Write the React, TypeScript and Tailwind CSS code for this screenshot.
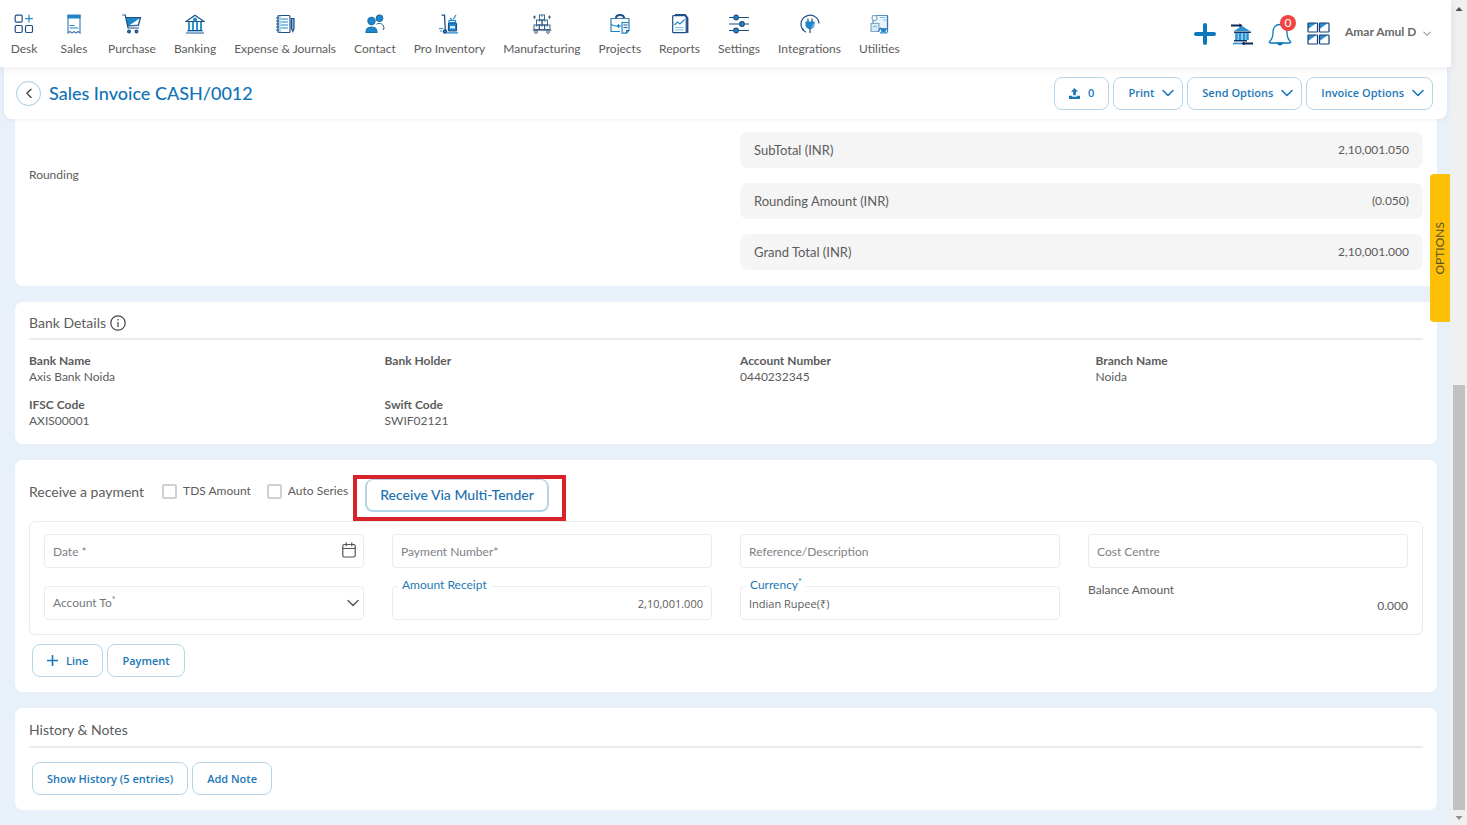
import type { ReactNode } from "react";

const D = "#1d4f86";
const B = "#1d87c9";
const L = "#7cc0ea";

function Glyph({ children, size = "size-5" }: { children: ReactNode; size?: string }) {
  return (
    <svg viewBox="0 0 20 20" className={size} fill="none" stroke={D} strokeWidth="1.2" aria-hidden="true">
      {children}
    </svg>
  );
}

const navItems: { label: string; icon: ReactNode }[] = [
  {
    label: "Desk",
    icon: (
      <Glyph>
        <rect x="1.2" y="1.2" width="7" height="7" rx="1.2" />
        <rect x="1.2" y="11.5" width="7" height="7" rx="1.2" />
        <rect x="11.5" y="11.5" width="7" height="7" rx="1.2" />
        <path d="M15 .8v7.6M11.2 4.6h7.6" stroke={B} />
      </Glyph>
    ),
  },
  {
    label: "Sales",
    icon: (
      <Glyph>
        <path d="M4 1v18l2-1.5L8 19l2-1.500L12 19l2-1.500L16 19V1Z" stroke="#4a7fb0" />
        <path d="M3.500 1h13v3.500h-13z" fill={B} stroke="none" />
        <path d="M5.500 11.500h5M5.500 14h9" stroke={B} />
      </Glyph>
    ),
  },
  {
    label: "Purchase",
    icon: (
      <Glyph>
        <path d="M4 4h14l-1.800 7L5.600 12Z" fill={B} stroke="none" />
        <path d="M17.500 4.500 16 10.500l-8.500.8Z" fill="#fff" stroke="none" />
        <path d="M.5 1h2.700l2.800 13H17M4 3.500h14.500l-2 8L5.800 12" />
        <circle cx="7" cy="17.500" r="1.400" fill={B} />
        <circle cx="14.500" cy="17.500" r="1.400" fill={B} />
      </Glyph>
    ),
  },
  {
    label: "Banking",
    icon: (
      <Glyph>
        <path d="M1 7.500 10 1.200l9 6.300Z" />
        <circle cx="10" cy="5.500" r="2" fill={B} stroke="none" />
        <path d="M4 8v8M8 8v8M12 8v8M16 8v8" stroke={B} strokeWidth="1.800" />
        <path d="M2.500 16.500h15M1 19h18" />
        <path d="M2 17.800h16" stroke={L} />
      </Glyph>
    ),
  },
  {
    label: "Expense & Journals",
    icon: (
      <Glyph>
        <rect x="3" y="1.500" width="12" height="17" rx="1" />
        <path d="M1 4h3M1 7h3M1 10h3M1 13h3M1 16h3" />
        <path d="M6 5h7M6 8h7M6 11h7M6 14h7" stroke={B} />
        <path d="M16.500 4.500h2.500v10l-1.200 3-1.300-3Z" fill={L} />
        <path d="M5 1.500v17" stroke={L} />
      </Glyph>
    ),
  },
  {
    label: "Contact",
    icon: (
      <Glyph>
        <circle cx="6.500" cy="7" r="3.600" fill={B} stroke="#1b70ad" />
        <circle cx="14.500" cy="4.200" r="3.200" fill={B} stroke="#1b70ad" />
        <path d="M1 18.500c0-3.800 2-5.500 5.500-5.500s5.500 1.700 5.500 5.500Z" fill={B} stroke="#1b70ad" />
        <path d="M11.500 10.200c3.500-2 7.500 0 7.500 5h-1.500" strokeWidth=".9" />
      </Glyph>
    ),
  },
  {
    label: "Pro Inventory",
    icon: (
      <Glyph>
        <path d="M2.500 1.200h3l.8 15" strokeWidth="1.300" />
        <circle cx="6" cy="17.500" r="1.700" fill={B} />
        <path d="M8 18.800h11M0 14.500h4M1 17h2" stroke={B} />
        <rect x="9.500" y="9" width="8" height="8" rx="1" fill={B} />
        <path d="M11 12h5v2.500h-5z" fill="#d8edf9" stroke="none" />
        <path d="M10 6.500h6.500v2H10zM11 4l2 2M14 5.500l3-4.500" stroke={B} />
      </Glyph>
    ),
  },
  {
    label: "Manufacturing",
    icon: (
      <Glyph>
        <g strokeWidth=".9" stroke="#31567d">
          <rect x="7.500" y="1" width="5" height="5" />
          <rect x="4.500" y="6" width="5.500" height="5" />
          <rect x="10" y="6" width="5.500" height="5" />
          <rect x="2" y="11" width="5.300" height="4.500" />
          <rect x="7.300" y="11" width="5.300" height="4.500" />
          <rect x="12.600" y="11" width="5.400" height="4.500" />
          <path d="M10 1v2M7.200 6v2M12.800 6v2M10 11v1.800M4.600 11v1.800M15.300 11v1.800" stroke={B} />
          <path d="M.5 16.200h19" />
          <circle cx="4" cy="18" r="1.400" />
          <circle cx="16" cy="18" r="1.400" />
          <path d="M1 3h3M2.500 1.500V5M16 3h3M17.500 1.500V5" />
        </g>
      </Glyph>
    ),
  },
  {
    label: "Projects",
    icon: (
      <Glyph>
        <path d="M1 8V4.500h18V8M1 8v9.500h9" stroke="#3c79ad" />
        <path d="M6 4c0-4 8-4 8 0" strokeWidth="2" />
        <path d="M1 10.500c3 1.500 5 1.800 9 1.500M1 17.500h9" stroke={B} />
        <path d="M8.500 10v4M7 12h4" stroke={B} />
        <path d="M12 8.500h7v8l-2.500 2.700H12Z" fill="#eaf5fc" stroke={B} />
        <path d="M13.500 11h4M13.500 13.500h4M16.500 19v-2.500H19" stroke={D} strokeWidth=".9" />
      </Glyph>
    ),
  },
  {
    label: "Reports",
    icon: (
      <Glyph>
        <path d="M5 .9h10L17.500 4v15" strokeWidth="1.800" />
        <rect x="2.700" y="1.700" width="13.500" height="17" rx=".8" />
        <path d="m4.500 11 3-3 2.500 2 4.500-4.500" stroke={B} />
        <path d="M5 13.500h8.500M5 16h8.500" stroke={L} />
      </Glyph>
    ),
  },
  {
    label: "Settings",
    icon: (
      <Glyph>
        <path d="M0 3.500h20M0 10h20M0 16.500h20" />
        <circle cx="7" cy="3.500" r="2.300" fill={B} />
        <circle cx="13" cy="10" r="2.300" fill={B} />
        <circle cx="7" cy="16.500" r="2.300" fill={B} />
      </Glyph>
    ),
  },
  {
    label: "Integrations",
    icon: (
      <Glyph>
        <path d="M6 18.200A9 9 0 1 1 19 9.500M2 14l2 2.500" />
        <path d="M6 8h8v2.500a4 4 0 0 1-8 0Z" fill={B} stroke={B} />
        <path d="M8 4.500V8M12 4.500V8M10 14v5" />
        <path d="m14 9-3.500 5.500L14 12Z" fill={L} stroke="none" />
      </Glyph>
    ),
  },
  {
    label: "Utilities",
    icon: (
      <Glyph>
        <path d="M4 1.500h14.500v13H4Z" fill="#e9f4fb" stroke="#5a8fbb" />
        <path d="M2 9.500h8v8H2Z" fill="#d8e8f4" stroke="#7fa9cc" />
        <circle cx="5.500" cy="4" r="2.500" stroke="#7fa9cc" fill="#fff" />
        <path d="M11 3.500h5M14 6h3M4 12.500h4" stroke={L} />
        <path d="M12 15h5l-1 2.500h-3ZM11 18.800h7" fill={B} stroke={B} />
        <path d="M18.500 2v16.500M9 17.500l3-4" stroke="#3b78b0" />
      </Glyph>
    ),
  },
];

function Chevron({ className }: { className: string }) {
  return (
    <svg viewBox="0 0 12 8" className={className} fill="none" stroke="currentColor" strokeLinecap="round" strokeLinejoin="round" aria-hidden="true">
      <path d="m1 1.500 5 5 5-5" />
    </svg>
  );
}

function TopBar() {
  return (
    <header className="relative z-20 flex h-[67px] justify-between bg-white shadow-[0_2px_8px_rgba(0,0,0,0.08)]">
      <nav aria-label="Main" className="flex gap-[18px] pt-[14px] pl-2 text-xs leading-4 text-[#5c5c5c]">
        {navItems.map((item) => (
          <a key={item.label} href="#" className="flex min-w-8 flex-col items-center gap-[7px] whitespace-nowrap">
            {item.icon}
            {item.label}
          </a>
        ))}
      </nav>
      <div className="flex items-center gap-[15px] pr-5">
        <button type="button" aria-label="Add new">
          <svg viewBox="0 0 22 22" className="size-[22px]" stroke="#0b77bd" strokeWidth="4" strokeLinecap="round" aria-hidden="true">
            <path d="M11 2v18M2 11h18" />
          </svg>
        </button>
        <button type="button" aria-label="Bank transfers">
          <svg viewBox="0 0 22 22" className="size-[22px]" fill="none" aria-hidden="true">
            <path d="m3 8 8-5 8 5Z" fill="#2b90cf" />
            <path d="M3 9.200h17M3 17.800h13" stroke="#12386b" strokeWidth="1.600" />
            <path d="M4 10h14v7H4Z" fill="#8cc6ea" />
            <path d="M5.500 10v7M9 10v7M13 10v7M16.500 10v7" stroke="#2b90cf" strokeWidth="2" />
            <path d="M2 20.500h11" stroke="#2b90cf" strokeWidth="1.600" />
            <path d="M0 2.500h9M12.500 20.500H22" stroke="#0d2858" strokeWidth="2" />
            <path d="M8.500.2v4.600l3-2.300ZM13.500 18.200v4.600l-3-2.300Z" fill="#0d2858" />
          </svg>
        </button>
        <button type="button" aria-label="Notifications" className="relative">
          <svg viewBox="0 0 24 24" className="size-6" fill="none" stroke="#0b77bd" strokeWidth="1.300" strokeLinejoin="round" aria-hidden="true">
            <path d="M12 2.500c-4.500 0-7 3.300-7 7.500 0 5-1 7.500-3.500 9.500-.5.800 0 1.500 1 1.500h19c1 0 1.500-.700 1-1.500C20 17.500 19 15 19 10c0-4.200-2.500-7.500-7-7.500Z" />
            <path d="M9.500 21.200c.8 2.200 4.200 2.200 5 0Z" fill="#0b77bd" />
          </svg>
          <span className="absolute -top-[7px] left-3 flex size-4 items-center justify-center rounded-full bg-[#f04343] text-xs leading-4 text-white">0</span>
        </button>
        <button type="button" aria-label="Applications">
          <svg viewBox="0 0 23 23" className="size-[23px]" aria-hidden="true">
            {[
              [1, 1],
              [12.5, 1],
              [1, 13],
              [12.5, 13],
            ].map(([x, y]) => (
              <g key={`${x}-${y}`} transform={`translate(${x} ${y})`}>
                <path d="M0 0h8.500L0 6Z" fill="#2b90cf" />
                <rect width="9.500" height="9" rx=".5" fill="none" stroke="#153f78" strokeWidth="1.200" />
              </g>
            ))}
          </svg>
        </button>
        <button type="button" className="flex items-center gap-[7px] pb-1 text-xs leading-4 font-bold text-[#6a6a6a]">
          <span className="w-[71px] overflow-hidden text-left whitespace-nowrap">Amar Amul D</span>
          <Chevron className="mt-1 w-2 stroke-[1.5]" />
        </button>
      </div>
    </header>
  );
}

function OutlineButton({ children, className = "" }: { children: ReactNode; className?: string }) {
  return (
    <button
      type="button"
      className={`flex h-[33px] items-center rounded-lg border border-[#b7d5e9] bg-white px-[14px] font-['Open_Sans','Noto_Sans',sans-serif] text-[11px] leading-4 font-semibold whitespace-nowrap text-[#1b78b8] ${className}`}
    >
      {children}
    </button>
  );
}

function TitleBar() {
  return (
    <div className="relative z-10 mr-1 ml-1 flex h-[52px] items-center justify-between rounded-b-lg bg-white pr-[14px] pl-3 shadow-[0_1px_5px_rgba(0,0,0,0.06)]">
      <div className="flex items-center gap-2">
        <button type="button" aria-label="Back" className="flex size-[25px] items-center justify-center rounded-full border border-[#a9c8de] text-[#444]">
          <Chevron className="w-[10px] rotate-90 stroke-[1.6]" />
        </button>
        <h1 className="text-lg leading-6 font-medium text-[#1173b8]">Sales Invoice CASH/0012</h1>
      </div>
      <div className="flex gap-1">
        <OutlineButton className="gap-2">
          <svg viewBox="0 0 12 12" className="size-[11px]" fill="currentColor" aria-hidden="true">
            <path d="M6 0 2.200 4h2.300v4h3V4h2.300ZM0 8.500h3.500v1h5v-1H12V12H0Z" />
          </svg>
          0
        </OutlineButton>
        {["Print", "Send Options", "Invoice Options"].map((label) => (
          <OutlineButton key={label} className="gap-2 pr-2">
            {label}
            <Chevron className="w-3 stroke-[1.6]" />
          </OutlineButton>
        ))}
      </div>
    </div>
  );
}

function Card({ children, className = "" }: { children: ReactNode; className?: string }) {
  return <section className={`rounded-lg bg-white px-[14px] ${className}`}>{children}</section>;
}

const totals = [
  ["SubTotal (INR)", "2,10,001.050"],
  ["Rounding Amount (INR)", "(0.050)"],
  ["Grand Total (INR)", "2,10,001.000"],
];

const bankDetails = [
  ["Bank Name", "Axis Bank Noida"],
  ["Bank Holder", ""],
  ["Account Number", "0440232345"],
  ["Branch Name", "Noida"],
  ["IFSC Code", "AXIS00001"],
  ["Swift Code", "SWIF02121"],
];

const inputBox = "h-[34px] w-full rounded border border-[#eaecee] bg-white px-2 text-[#5c5c5c] outline-none placeholder:text-[#7d8288] placeholder:opacity-100";
const fieldBox = `${inputBox} text-xs`;
const filledBox = `${inputBox} font-['Open_Sans','Noto_Sans',sans-serif] text-[11px]`;
const floatLabel = "absolute -top-[9px] left-[6px] bg-white px-1 text-xs leading-4 text-[#2379b5]";

function CheckItem({ id, label }: { id: string; label: string }) {
  return (
    <span className="flex items-center gap-[6px]">
      <input id={id} type="checkbox" className="size-[15px] appearance-none rounded-xs border-2 border-[#ced1d4] bg-white" />
      <label htmlFor={id} className="text-xs leading-4 text-[#5c5c5c]">{label}</label>
    </span>
  );
}

function PaymentForm() {
  return (
    <div className="grid grid-cols-4 gap-x-7 gap-y-[18px] rounded-md border border-[#e9ebed] px-[14px] pt-3 pb-[14px]">
      <div className="relative">
        <input aria-label="Date" placeholder="Date *" className={fieldBox} />
        <svg viewBox="0 0 14 16" className="pointer-events-none absolute top-2 right-2 h-4 w-[14px]" fill="none" stroke="#555" strokeWidth="1.200" strokeLinecap="round" aria-hidden="true">
          <rect x=".8" y="2.500" width="12.400" height="12.500" rx="1.500" />
          <path d="M.8 6.500h12.400M4.200.8v3M9.800.8v3" />
        </svg>
      </div>
      <input aria-label="Payment Number" placeholder="Payment Number*" className={fieldBox} />
      <input aria-label="Reference/Description" placeholder="Reference/Description" className={fieldBox} />
      <input aria-label="Cost Centre" placeholder="Cost Centre" className={fieldBox} />
      <div className="relative">
        <select id="account" className={`${fieldBox} appearance-none`} />
        <label htmlFor="account" className="pointer-events-none absolute top-[9px] left-[9px] text-xs leading-4 text-[#74797e]">
          Account To<sup className="text-[9px]">*</sup>
        </label>
        <Chevron className="pointer-events-none absolute top-[13px] right-[5px] w-3 stroke-[#555] stroke-[1.4]" />
      </div>
      <div className="relative">
        <input id="amount" defaultValue="2,10,001.000" className={`${filledBox} text-right`} />
        <label htmlFor="amount" className={floatLabel}>Amount Receipt</label>
      </div>
      <div className="relative">
        <input id="currency" defaultValue="Indian Rupee(₹)" className={filledBox} />
        <label htmlFor="currency" className={floatLabel}>
          Currency<sup className="text-[9px]">*</sup>
        </label>
      </div>
      <div className="-mt-1 text-xs leading-4">
        <div>Balance Amount</div>
        <div className="text-right">0.000</div>
      </div>
    </div>
  );
}

function WindowScrollbar() {
  return (
    <div aria-hidden="true" className="flex w-4 flex-col items-center bg-[#f0f0f0]">
      <svg viewBox="0 0 16 17" className="h-[17px] w-4" fill="#505050">
        <path d="m4.500 11 3.500-4 3.500 4Z" />
      </svg>
      <div className="flex w-3 grow flex-col">
        <div className="grow-[368]" />
        <div className="grow-[424] bg-[#c1c1c1]" />
      </div>
      <svg viewBox="0 0 16 16" className="size-4" fill="#909090">
        <path d="m4.500 6 3.500 4 3.500-4Z" />
      </svg>
    </div>
  );
}

export default function App() {
  return (
    <div className="flex min-h-screen bg-[#e8f1f9] font-['Lato','Noto_Sans',sans-serif] text-[#5c5c5c]">
      <div className="relative min-w-0 flex-1">
        <TopBar />
        <TitleBar />
        <main className="flex flex-col gap-4 pr-[14px] pb-4 pl-[15px]">
          <Card className="-mt-2 grid grid-cols-2 gap-7 pt-[21px] pb-4">
            <p className="pt-[35px] text-xs leading-4">Rounding</p>
            <dl className="flex flex-col gap-[15px]">
              {totals.map(([name, value]) => (
                <div key={name} className="flex h-9 items-center justify-between rounded-lg bg-[#f5f5f5] px-[14px] text-xs leading-4">
                  <dt className="text-[13px]">{name}</dt>
                  <dd>{value}</dd>
                </div>
              ))}
            </dl>
          </Card>

          <Card className="pt-[11px] pb-[15px]">
            <h2 className="flex items-center gap-1 border-b-2 border-[#ebebeb] pb-[5px] text-sm leading-5">
              Bank Details
              <svg viewBox="0 0 16 16" className="size-4" fill="none" stroke="#444" strokeWidth="1.200" aria-hidden="true">
                <circle cx="8" cy="8" r="7.200" />
                <path d="M8 7v5M8 4v1.500" />
              </svg>
            </h2>
            <dl className="mt-[13px] grid grid-cols-4 gap-x-7 gap-y-3 text-xs leading-4">
              {bankDetails.map(([name, value]) => (
                <div key={name}>
                  <dt className="font-bold">{name}</dt>
                  <dd>{value}</dd>
                </div>
              ))}
            </dl>
          </Card>

          <Card className="pt-[15px] pb-[15px]">
            <div className="flex items-start">
              <h2 className="pt-[7px] text-sm leading-5">Receive a payment</h2>
              <div className="flex gap-4 pt-2 pl-[18px]">
                <CheckItem id="tds" label="TDS Amount" />
                <CheckItem id="series" label="Auto Series" />
              </div>
              <div className="ml-[5px] border-4 border-[#d8232a] pr-[13px] pb-[5px] pl-2">
                <button type="button" className="h-[33px] rounded-lg border-2 border-t border-[#b3d5ea] px-[13px] text-sm leading-5 font-medium text-[#1b70b0]">
                  Receive Via Multi-Tender
                </button>
              </div>
            </div>
            <PaymentForm />
            <div className="mt-[9px] flex gap-1 pl-[3px]">
              <OutlineButton className="gap-2">
                <svg viewBox="0 0 11 11" className="size-[11px]" stroke="currentColor" strokeWidth="1.600" aria-hidden="true">
                  <path d="M5.500 0v11M0 5.500h11" />
                </svg>
                Line
              </OutlineButton>
              <OutlineButton>Payment</OutlineButton>
            </div>
          </Card>

          <Card className="pt-3 pb-[15px]">
            <h2 className="border-b-2 border-[#ebebeb] pb-[6px] text-sm leading-5">History &amp; Notes</h2>
            <div className="mt-[14px] flex gap-1 pl-[3px]">
              <OutlineButton>Show History (5 entries)</OutlineButton>
              <OutlineButton>Add Note</OutlineButton>
            </div>
          </Card>
        </main>
        <button
          type="button"
          className="absolute top-[174px] right-px flex h-[148px] w-5 items-center justify-center rounded-l bg-[#fdc006] text-xs leading-4 text-[#5c5326]"
        >
          <span className="rotate-180 [writing-mode:vertical-rl]">OPTIONS</span>
        </button>
      </div>
      <WindowScrollbar />
    </div>
  );
}
